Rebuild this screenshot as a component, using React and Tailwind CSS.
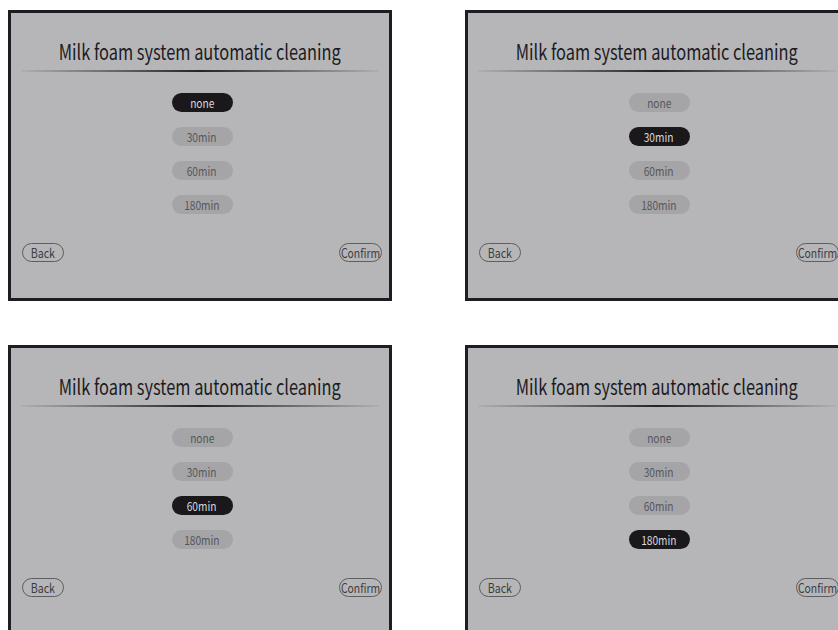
import React from 'react';

const options = ['none', '30min', '60min', '180min'];

function Panel({ selected }) {
    return (
        <div className="w-[384px] h-[291px] shrink-0 border-[3px] border-[#1e1d24] bg-[#b6b6b8] flex flex-col">
            <h1 className="mt-[24px] text-center text-[21px] leading-[28px] text-[#1c1b1f] whitespace-nowrap">
                <span className="inline-block scale-x-[0.78]">Milk foam system automatic cleaning</span>
            </h1>

            <div className="mx-[10px] mt-[5px] h-[2px] bg-[linear-gradient(to_right,rgba(40,40,44,0.05),rgba(20,20,24,0.9)_50%,rgba(40,40,44,0.05))]" />

            <div className="mt-[21px] flex flex-col items-center gap-[15px] pl-[4px]">
                {options.map((opt, i) => (
                    <div
                        key={opt}
                        className={
                            i === selected
                                ? 'w-[61px] h-[19px] rounded-full bg-[#1b181c] text-[#d9d9d9] text-[12px] leading-[19px] text-center'
                                : 'w-[61px] h-[19px] rounded-full bg-[#a5a5a7] text-[#55555a] text-[12px] leading-[19px] text-center'
                        }
                    >
                        <span className="inline-block scale-x-[0.85]">{opt}</span>
                    </div>
                ))}
            </div>

            <div className="mt-[29px] flex justify-between pl-[11px] pr-[7px]">
                <div className="w-[42px] h-[19px] rounded-full border border-[#5e5e62] text-[13px] leading-[17px] text-center text-[#3c3c40] whitespace-nowrap">
                    <span className="inline-block scale-x-[0.82]">Back</span>
                </div>
                <div className="w-[43px] h-[19px] rounded-full border border-[#5e5e62] text-[13px] leading-[17px] text-center text-[#3c3c40] whitespace-nowrap flex justify-center">
                    <span className="inline-block scale-x-[0.8]">Confirm</span>
                </div>
            </div>
        </div>
    );
}

export default function App() {
    return (
        <div className="w-[838px] h-[630px] overflow-hidden bg-white font-['Noto_Sans_CJK_SC','Noto_Sans',sans-serif]">
            <div className="w-[900px] pl-[8px] pt-[10px] grid grid-cols-[384px_384px] gap-x-[73px] gap-y-[44px]">
                <Panel selected={0} />
                <Panel selected={1} />
                <Panel selected={2} />
                <Panel selected={3} />
            </div>
        </div>
    );
}
